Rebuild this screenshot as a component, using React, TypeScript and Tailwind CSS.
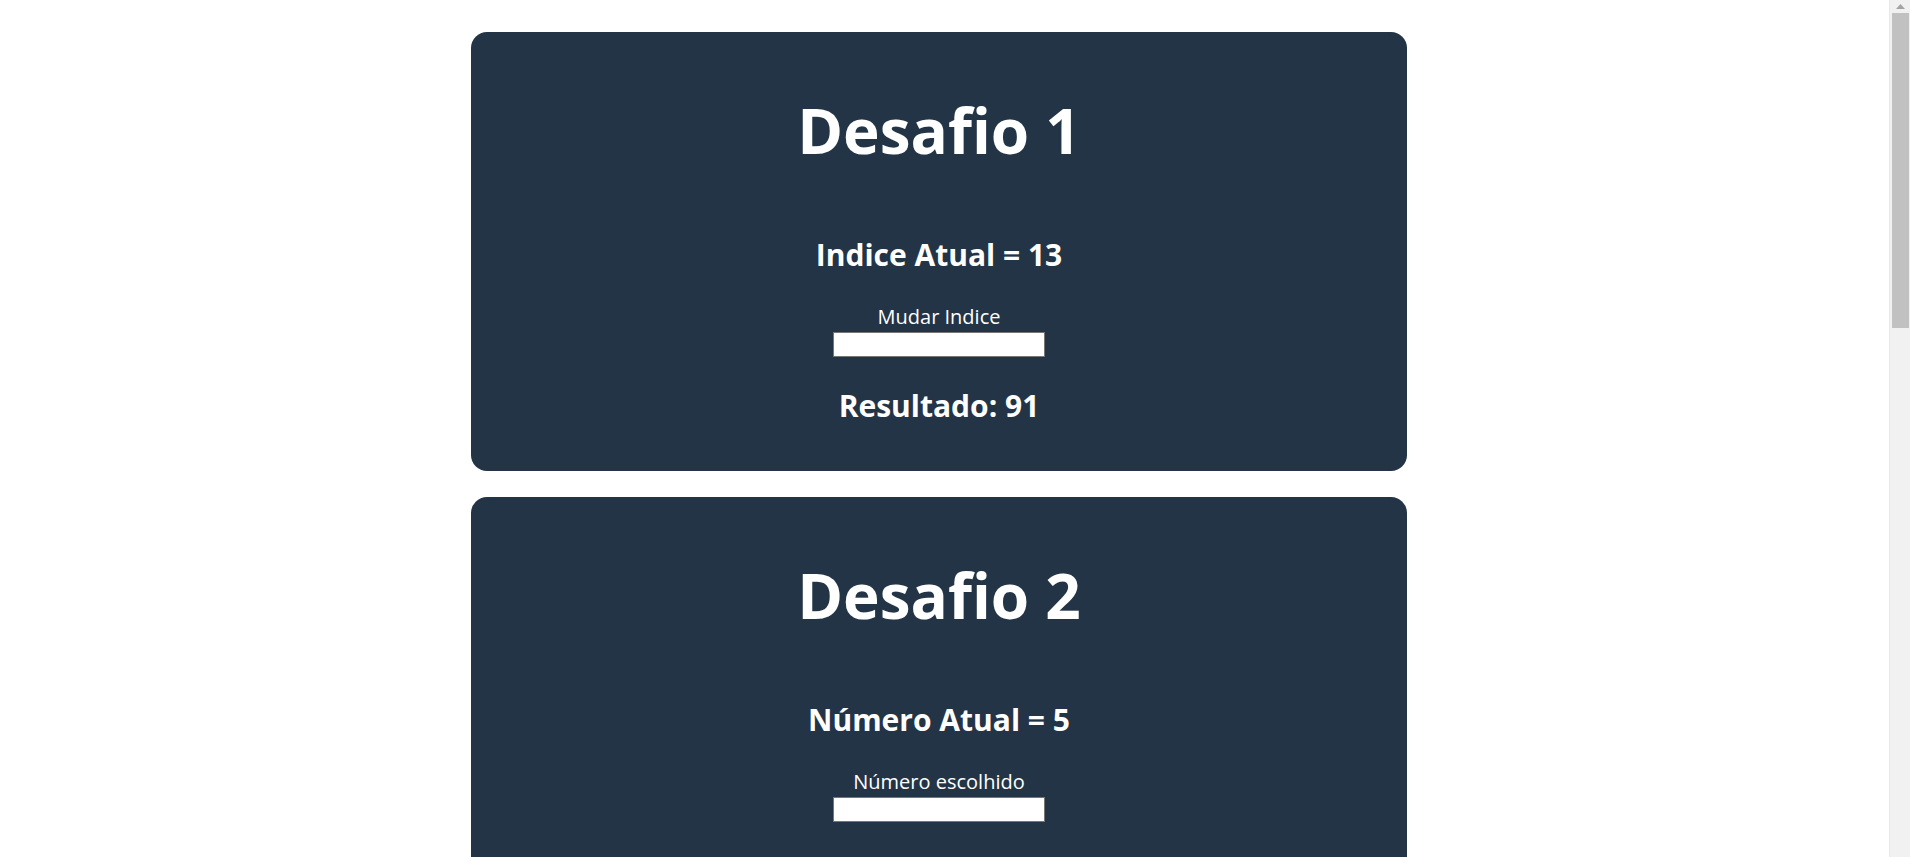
const font = { fontFamily: '"Open Sans", "Noto Sans", sans-serif' };

function Challenge({
  title,
  current,
  label,
  result,
}: {
  title: string;
  current: string;
  label: string;
  result: string;
}) {
  return (
    <section className="w-[936px] rounded-2xl bg-[#233446] text-white flex flex-col items-center pt-[67px] pb-[50px]">
      <h1 className="text-[62px] leading-[62px] font-bold">{title}</h1>
      <h2 className="mt-[79px] text-[30px] leading-[30px] font-bold">{current}</h2>
      <label className="mt-[37px] flex flex-col items-center text-[20px] leading-[20px]">
        {label}
        <input type="text" className="mt-[5px] w-[212px] h-[25px] bg-white border border-[#767676] outline-none" />
      </label>
      <h2 className="mt-[34px] text-[30px] leading-[30px] font-bold">{result}</h2>
    </section>
  );
}

// fake classic scrollbar on the right edge
function Scrollbar() {
  return (
    <aside className="sticky top-0 self-start h-screen w-[21px] shrink-0 bg-[#f1f1f1] border-l border-[#e8e8e8] flex flex-col items-center">
      <div className="h-[13px] w-full flex items-center justify-center">
        <svg width="9" height="5" viewBox="0 0 9 5">
          <path d="M0 5 L4.5 0 L9 5 Z" fill="#a3a3a3" />
        </svg>
      </div>
      <div className="w-[17px] h-[315px] bg-[#c1c1c1]" />
    </aside>
  );
}

export default function App() {
  return (
    <div style={font} className="min-h-screen bg-white flex">
      <main className="flex-1 flex flex-col items-center gap-[26px] pt-8 pb-8 pr-[11px]">
        <Challenge title="Desafio 1" current="Indice Atual = 13" label="Mudar Indice" result="Resultado: 91" />
        <Challenge title="Desafio 2" current="Número Atual = 5" label="Número escolhido" result="Resultado: 5" />
      </main>
      <Scrollbar />
    </div>
  );
}
